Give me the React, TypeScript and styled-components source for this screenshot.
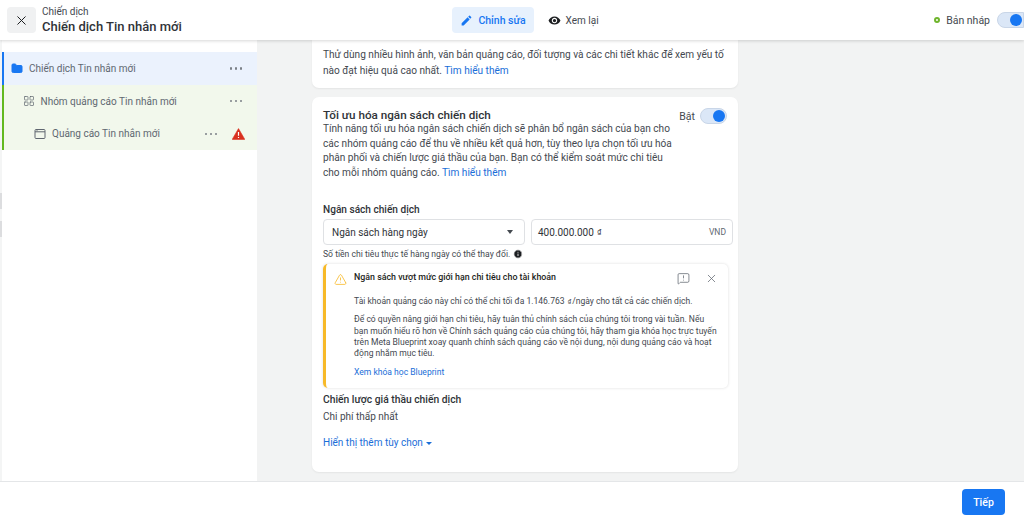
import React from "react";
import styled, { createGlobalStyle } from "styled-components";
import { X, Folder, LayoutGrid, AlertTriangle, Info, MessageSquareWarning } from "lucide-react";
import { MdEdit, MdRemoveRedEye } from "react-icons/md";

const GlobalStyle = createGlobalStyle`
  html, body {
    margin: 0;
    padding: 0;
    height: 517px;
    overflow: hidden;
    background: #f2f3f3;
    font-family: Roboto, "Noto Sans", sans-serif;
    color: #444950;
  }
  * { box-sizing: border-box; }
`;

const Page = styled.div`
  display: flex;
  flex-direction: column;
  width: 1024px;
  height: 517px;
`;

const Header = styled.header`
  position: relative;
  z-index: 2;
  display: grid;
  grid-template-columns: 1fr auto 1fr;
  align-items: center;
  height: 40px;
  padding: 0 0 0 7px;
  background: #fff;
  box-shadow: 0 1px 3px rgba(0, 0, 0, 0.16);
`;

const HeaderLeft = styled.div`
  display: flex;
  align-items: center;
  gap: 6px;
`;

const CloseBtn = styled.div`
  display: flex;
  align-items: center;
  justify-content: center;
  width: 29px;
  height: 26px;
  border-radius: 4px;
  background: #f0f1f2;
  color: #1c1e21;
`;

const Titles = styled.div`
  display: flex;
  flex-direction: column;
  gap: 1px;
  margin-top: -1px;
`;

const Crumb = styled.div`
  font-size: 10px;
  line-height: 13px;
  color: #444950;
`;

const CampaignName = styled.div`
  font-size: 13px;
  line-height: 16px;
  font-weight: 500;
  color: #303338;
`;

const Tabs = styled.div`
  display: flex;
  align-items: center;
  gap: 4px;
  margin-left: 30px;
`;

const Tab = styled.div<{ $active?: boolean }>`
  display: flex;
  align-items: center;
  gap: 5px;
  height: 26px;
  padding: 0 ${(p) => (p.$active ? "8px" : "10px")};
  border-radius: 4px;
  font-size: ${(p) => (p.$active ? "10.5px" : "10px")};
  font-weight: ${(p) => (p.$active ? 500 : 400)};
  color: ${(p) => (p.$active ? "#1877f2" : "#444950")};
  background: ${(p) => (p.$active ? "#e7f1fd" : "transparent")};
`;

const HeaderRight = styled.div`
  display: flex;
  align-items: center;
  justify-content: flex-end;
  gap: 7px;
  font-size: 10.5px;
  color: #444950;
`;

const StatusDot = styled.span`
  width: 6px;
  height: 6px;
  margin-right: -1px;
  border-radius: 50%;
  border: 2px solid #6fb52c;
`;

const Toggle = styled.div<{ $cut?: boolean }>`
  display: flex;
  align-items: center;
  justify-content: flex-end;
  flex-shrink: 0;
  width: 27px;
  height: 16px;
  padding: 1px;
  border-radius: ${(p) => (p.$cut ? "8px 0 0 8px" : "8px")};
  background: #dbe7f7;
  border: 1px solid #c9d6e8;
`;

const Knob = styled.span`
  width: 12px;
  height: 12px;
  border-radius: 50%;
  background: #1877f2;
`;

const Body = styled.div`
  flex: 1;
  display: flex;
  min-height: 0;
`;

const Rail = styled.div`
  display: flex;
  flex-direction: column;
  gap: 12px;
  width: 2px;
  padding-top: 153px;
  background: #f4f5f5;
`;

const RailMark = styled.span`
  height: 16px;
  background: #dcdddf;
`;

const Sidebar = styled.aside`
  width: 255px;
  padding-top: 12px;
  background: #fff;
`;

const TreeRow = styled.div<{ $level: number; $blue?: boolean }>`
  display: flex;
  align-items: center;
  height: 32.8px;
  padding: 0 10px 0 ${(p) => 7 + p.$level * 11.5}px;
  border-left: 2px solid ${(p) => (p.$blue ? "#1877f2" : "#63b81f")};
  background: ${(p) => (p.$blue ? "#ebf2fd" : "#f2f8ec")};
  font-size: 10px;
  color: #606770;
`;

const TreeIcon = styled.span`
  display: flex;
  align-items: center;
  justify-content: center;
  width: 12px;
  margin-right: 6px;
  color: #606770;
`;

const TreeLabel = styled.span`
  flex: 1;
  white-space: nowrap;
`;

const Dots = styled.span`
  display: flex;
  gap: 2.5px;
  margin-right: 5px;

  i {
    width: 2.5px;
    height: 2.5px;
    border-radius: 50%;
    background: #7b8087;
  }
`;

const Warn = styled.span`
  display: flex;
  margin-left: 10px;
  margin-right: 2px;
`;

const Main = styled.main`
  flex: 1;
  display: flex;
  flex-direction: column;
  gap: 9px;
  padding: 0 286px 9px 55px;
  overflow: hidden;
`;

const Card = styled.section<{ $grow?: boolean }>`
  ${(p) => (p.$grow ? "flex: 1;" : "")}
  padding: 8px 11px;
  border-radius: 7px;
  background: #fff;
  box-shadow: 0 1px 2px rgba(0, 0, 0, 0.06);
`;

const TopCard = styled(Card)`
  height: 48px;
  padding-top: 7px;
  border-radius: 0 0 7px 7px;
`;

const BodyText = styled.p`
  margin: 0;
  font-size: 10.1px;
  line-height: 14.5px;
  color: #444950;
`;

const TopText = styled(BodyText)`
  line-height: 15.5px;
`;

const Link = styled.span`
  color: #1a6ed8;
`;

const CardHead = styled.div`
  display: flex;
  justify-content: space-between;
  align-items: flex-start;
  margin-top: 2px;
`;

const CardTitle = styled.h2`
  margin: 0;
  font-size: 11.7px;
  line-height: 17px;
  font-weight: 500;
  color: #303338;
`;

const Switch = styled.div`
  display: flex;
  align-items: center;
  gap: 5px;
  margin-top: 1px;
  font-size: 10.5px;
`;

const Description = styled(BodyText)`
  width: 355px;
  margin-top: -2px;
`;

const FieldLabel = styled.div`
  margin-top: 23px;
  font-size: 10.1px;
  line-height: 14px;
  font-weight: 500;
  color: #303338;
`;

const Inputs = styled.div`
  display: flex;
  gap: 6px;
  margin-top: 2px;
  margin-right: -6px;
`;

const Field = styled.div`
  flex: 0 0 202px;
  display: flex;
  align-items: center;
  justify-content: space-between;
  height: 26px;
  padding: 0 6px 0 8px;
  border: 1px solid #dfe1e4;
  border-radius: 4px;
  font-size: 10px;
  color: #303338;
`;

const AmountField = styled(Field)`
  padding-left: 6px;
`;

const Caret = styled.span`
  width: 0;
  height: 0;
  margin-right: 5px;
  border-left: 3.5px solid transparent;
  border-right: 3.5px solid transparent;
  border-top: 4px solid #444950;
`;

const DongSign = styled.span`
  margin: 0 1px;
  font-size: 0.7em;
  vertical-align: 0.2em;
`;

const Currency = styled.span`
  font-size: 8.5px;
  color: #606770;
`;

const Hint = styled.div`
  display: flex;
  align-items: center;
  gap: 3px;
  margin-top: 2px;
  font-size: 8.6px;
  line-height: 14px;
  color: #444950;
`;

const Alert = styled.div`
  display: flex;
  width: 405px;
  height: 124px;
  margin-top: 3px;
  padding: 7px 10px 0 8px;
  border-left: 3px solid #f7b928;
  border-radius: 5px;
  box-shadow: 0 0 3px rgba(0, 0, 0, 0.14);
`;

const AlertIcon = styled.span`
  display: flex;
  width: 20px;
  margin-top: 2px;
  color: #f7b928;
`;

const AlertBody = styled.div`
  flex: 1;
  font-size: 8.55px;
  line-height: 11.3px;
  color: #444950;

  p {
    margin: 0 0 7px;
  }
`;

const AlertHead = styled.div`
  display: flex;
  align-items: center;
  justify-content: space-between;
  height: 14px;
  margin-bottom: 10px;
`;

const AlertTitle = styled.strong`
  font-size: 8.85px;
  font-weight: 500;
  color: #1c1e21;
`;

const AlertActions = styled.div`
  display: flex;
  align-items: center;
  gap: 15px;
  color: #606770;
`;

const AlertLink = styled(Link)`
  display: block;
  margin-top: 6.5px;
`;

const Bid = styled.div`
  margin-top: 5px;
  font-size: 10.3px;
  line-height: 14px;
  font-weight: 500;
  color: #303338;
`;

const BidValue = styled.div`
  margin-top: 3px;
  font-size: 10px;
  line-height: 14px;
  color: #444950;
`;

const MoreLink = styled.div`
  display: flex;
  align-items: center;
  gap: 3px;
  margin-top: 12px;
  font-size: 10px;
  line-height: 14px;
  color: #1a6ed8;
`;

const SmallCaret = styled.span`
  width: 0;
  height: 0;
  margin-top: 1px;
  border-left: 3px solid transparent;
  border-right: 3px solid transparent;
  border-top: 3px solid #1a6ed8;
`;

const Footer = styled.footer`
  display: flex;
  align-items: flex-start;
  justify-content: flex-end;
  height: 36px;
  padding: 7px 19px 0 0;
  background: #fff;
  border-top: 1px solid #e4e6e8;
`;

const NextBtn = styled.button`
  width: 43px;
  height: 26px;
  border: 0;
  border-radius: 4px;
  background: #1877f2;
  color: #fff;
  font-family: inherit;
  font-size: 10.5px;
  font-weight: 500;
`;

function MoreDots() {
  return (
    <Dots>
      <i />
      <i />
      <i />
    </Dots>
  );
}

function AdIcon() {
  return (
    <svg width="12" height="12" viewBox="0 0 12 12" fill="none" stroke="#606770" strokeWidth="1">
      <rect x="1" y="1.5" width="10" height="9" rx="1" />
      <path d="M1 3.8h10M2.5 2.7h1" />
    </svg>
  );
}

function ErrorTriangle() {
  return (
    <svg width="13" height="12" viewBox="0 0 13 12">
      <path d="M6.5 .6 12.8 11.4H.2z" fill="#d9301f" stroke="#d9301f" strokeLinejoin="round" strokeWidth=".6" />
      <path d="M6.5 4v3.8M6.5 8.9v1.2" stroke="#fff" strokeWidth="1.2" />
    </svg>
  );
}

export default function App() {
  return (
    <Page>
      <GlobalStyle />
      <Header>
        <HeaderLeft>
          <CloseBtn>
            <X size={15} strokeWidth={1.6} />
          </CloseBtn>
          <Titles>
            <Crumb>Chiến dịch</Crumb>
            <CampaignName>Chiến dịch Tin nhắn mới</CampaignName>
          </Titles>
        </HeaderLeft>
        <Tabs>
          <Tab $active>
            <MdEdit size={13} />
            Chỉnh sửa
          </Tab>
          <Tab>
            <MdRemoveRedEye size={13} color="#1c1e21" />
            Xem lại
          </Tab>
        </Tabs>
        <HeaderRight>
          <StatusDot />
          Bản nháp
          <Toggle $cut>
            <Knob />
          </Toggle>
        </HeaderRight>
      </Header>
      <Body>
        <Rail>
          <RailMark />
          <RailMark />
        </Rail>
        <Sidebar>
          <TreeRow $level={0} $blue>
            <TreeIcon>
              <Folder size={13} fill="#1877f2" color="#1877f2" />
            </TreeIcon>
            <TreeLabel>Chiến dịch Tin nhắn mới</TreeLabel>
            <MoreDots />
          </TreeRow>
          <TreeRow $level={1}>
            <TreeIcon>
              <LayoutGrid size={14} strokeWidth={1.4} />
            </TreeIcon>
            <TreeLabel>Nhóm quảng cáo Tin nhắn mới</TreeLabel>
            <MoreDots />
          </TreeRow>
          <TreeRow $level={2}>
            <TreeIcon>
              <AdIcon />
            </TreeIcon>
            <TreeLabel>Quảng cáo Tin nhắn mới</TreeLabel>
            <MoreDots />
            <Warn>
              <ErrorTriangle />
            </Warn>
          </TreeRow>
        </Sidebar>
        <Main>
          <TopCard>
            <TopText>
              Thử dùng nhiều hình ảnh, văn bản quảng cáo, đối tượng và các chi tiết khác để xem yếu tố nào đạt hiệu quả cao nhất. <Link>Tìm hiểu thêm</Link>
            </TopText>
          </TopCard>
          <Card $grow>
            <CardHead>
              <CardTitle>Tối ưu hóa ngân sách chiến dịch</CardTitle>
              <Switch>
                Bật
                <Toggle>
                  <Knob />
                </Toggle>
              </Switch>
            </CardHead>
            <Description>
              Tính năng tối ưu hóa ngân sách chiến dịch sẽ phân bổ ngân sách của bạn cho các nhóm quảng cáo để thu về nhiều kết quả hơn, tùy theo lựa chọn tối ưu hóa phân phối và chiến lược giá thầu của bạn. Bạn có thể kiểm soát mức chi tiêu cho mỗi nhóm quảng cáo. <Link>Tìm hiểu thêm</Link>
            </Description>
            <FieldLabel>Ngân sách chiến dịch</FieldLabel>
            <Inputs>
              <Field>
                Ngân sách hàng ngày
                <Caret />
              </Field>
              <AmountField>
                <span>
                  400.000.000 <DongSign>₫</DongSign>
                </span>
                <Currency>VND</Currency>
              </AmountField>
            </Inputs>
            <Hint>
              Số tiền chi tiêu thực tế hàng ngày có thể thay đổi.
              <Info size={10} fill="#1c1e21" color="#fff" />
            </Hint>
            <Alert>
              <AlertIcon>
                <AlertTriangle size={13} strokeWidth={1.5} />
              </AlertIcon>
              <AlertBody>
                <AlertHead>
                  <AlertTitle>Ngân sách vượt mức giới hạn chi tiêu cho tài khoản</AlertTitle>
                  <AlertActions>
                    <MessageSquareWarning size={13} strokeWidth={1.4} />
                    <X size={13} strokeWidth={1.4} />
                  </AlertActions>
                </AlertHead>
                <p>
                  Tài khoản quảng cáo này chỉ có thể chi tối đa 1.146.763 <DongSign>₫</DongSign>/ngày cho tất cả các chiến dịch.
                </p>
                <p>
                  Để có quyền nâng giới hạn chi tiêu, hãy tuân thủ chính sách của chúng tôi trong vài tuần. Nếu bạn muốn hiểu rõ hơn về Chính sách quảng cáo của chúng tôi, hãy tham gia khóa học trực tuyến trên Meta Blueprint xoay quanh chính sách quảng cáo về nội dung, nội dung quảng cáo và hoạt động nhắm mục tiêu.
                </p>
                <AlertLink>Xem khóa học Blueprint</AlertLink>
              </AlertBody>
            </Alert>
            <Bid>Chiến lược giá thầu chiến dịch</Bid>
            <BidValue>Chi phí thấp nhất</BidValue>
            <MoreLink>
              Hiển thị thêm tùy chọn
              <SmallCaret />
            </MoreLink>
          </Card>
        </Main>
      </Body>
      <Footer>
        <NextBtn>Tiếp</NextBtn>
      </Footer>
    </Page>
  );
}
